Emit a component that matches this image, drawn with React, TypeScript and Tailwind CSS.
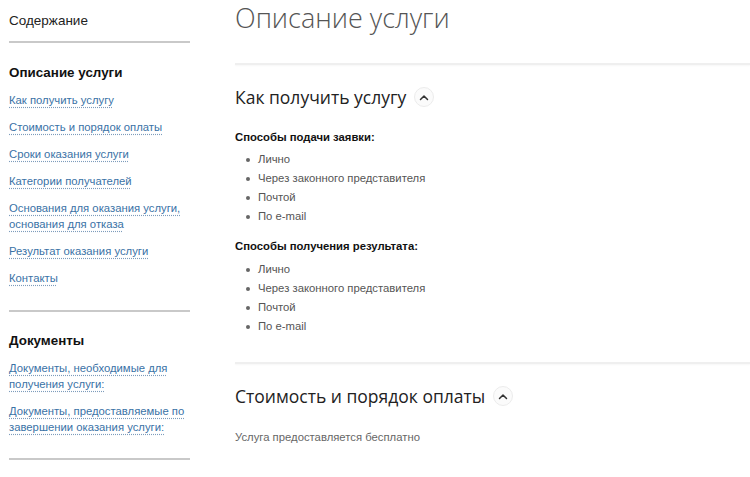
import React from "react";

const sans = "font-['Liberation_Sans',Arial,sans-serif]";
const open = "font-['Open_Sans','Noto_Sans',sans-serif]";

function NavLink({ children, first }: { children: React.ReactNode; first?: boolean }) {
  return (
    <div className={`${first ? "mt-[10px]" : "mt-[11px]"} text-[11.3px] leading-[16px]`}>
      <a className="cursor-pointer text-[#3a72a6] underline decoration-dotted decoration-[#7d9cbb] underline-offset-[3px]">
        {children}
      </a>
    </div>
  );
}

function Chevron() {
  return (
    <span className="ml-[8px] flex h-[20px] w-[20px] items-center justify-center rounded-full border border-[#ececec] bg-[#fbfbfb]">
      <svg width="10" height="7" viewBox="0 0 10 7" fill="none">
        <path d="M1.5 5.5L5 2L8.5 5.5" stroke="#333" strokeWidth="1.5" strokeLinecap="round" strokeLinejoin="round" />
      </svg>
    </span>
  );
}

function Bullets({ items, className }: { items: string[]; className: string }) {
  return (
    <ul className={`${className} text-[11.3px] leading-[19px] text-[#555]`}>
      {items.map((it) => (
        <li key={it} className="flex items-center pl-[11px]">
          <span className="h-[4px] w-[4px] rounded-full bg-[#666]" />
          <span className="ml-[8px]">{it}</span>
        </li>
      ))}
    </ul>
  );
}

const ways = ["Лично", "Через законного представителя", "Почтой", "По e-mail"];

export default function App() {
  return (
    <div className={`${sans} flex h-[477px] w-[750px] overflow-hidden bg-white`}>
      {/* sidebar */}
      <aside className="ml-[9px] w-[181px] shrink-0 pt-[12px]">
        <div className="text-[13.5px] leading-[18px] text-[#222]">Содержание</div>
        <div className="mt-[11px] h-[2px] bg-[#c9c9c9]" />

        <div className="mt-[21px] text-[13.4px] font-bold leading-[18px] text-[#111]">Описание услуги</div>
        <NavLink first>Как получить услугу</NavLink>
        <NavLink>Стоимость и порядок оплаты</NavLink>
        <NavLink>Сроки оказания услуги</NavLink>
        <NavLink>Категории получателей</NavLink>
        <NavLink>Основания для оказания услуги, основания для отказа</NavLink>
        <NavLink>Результат оказания услуги</NavLink>
        <NavLink>Контакты</NavLink>
        <div className="mt-[24px] h-[2px] bg-[#c9c9c9]" />

        <div className="mt-[20px] text-[13.4px] font-bold leading-[18px] text-[#111]">Документы</div>
        <NavLink first>Документы, необходимые для получения услуги:</NavLink>
        <NavLink>Документы, предоставляемые по завершении оказания услуги:</NavLink>
        <div className="mt-[23px] h-[2px] bg-[#c9c9c9]" />
      </aside>

      {/* main */}
      <main className="ml-[45px] flex-1">
        <h1 className={`${open} text-[27px] font-light leading-[36px] text-[#555]`}>Описание услуги</h1>
        <div className="mt-[27px] h-[2px] bg-[#efefef] shadow-[0_1px_2px_rgba(0,0,0,0.04)]" />

        <h2 className={`${open} mt-[19px] flex items-center text-[17.5px] leading-[26px] text-[#222]`}>
          Как получить услугу
          <Chevron />
        </h2>

        <h3 className="mt-[19px] text-[11.3px] font-bold leading-[16px] text-[#111]">Способы подачи заявки:</h3>
        <Bullets className="mt-[5px]" items={ways} />

        <h3 className="mt-[12px] text-[11.3px] font-bold leading-[16px] text-[#111]">Способы получения результата:</h3>
        <Bullets className="mt-[6px]" items={ways} />

        <div className="mt-[26px] h-[2px] bg-[#efefef] shadow-[0_1px_2px_rgba(0,0,0,0.04)]" />

        <h2 className={`${open} mt-[19px] flex items-center text-[17.5px] leading-[26px] text-[#222]`}>
          Стоимость и порядок оплаты
          <Chevron />
        </h2>
        <p className="mt-[20px] text-[11.3px] leading-[16px] text-[#666]">Услуга предоставляется бесплатно</p>
      </main>
    </div>
  );
}
